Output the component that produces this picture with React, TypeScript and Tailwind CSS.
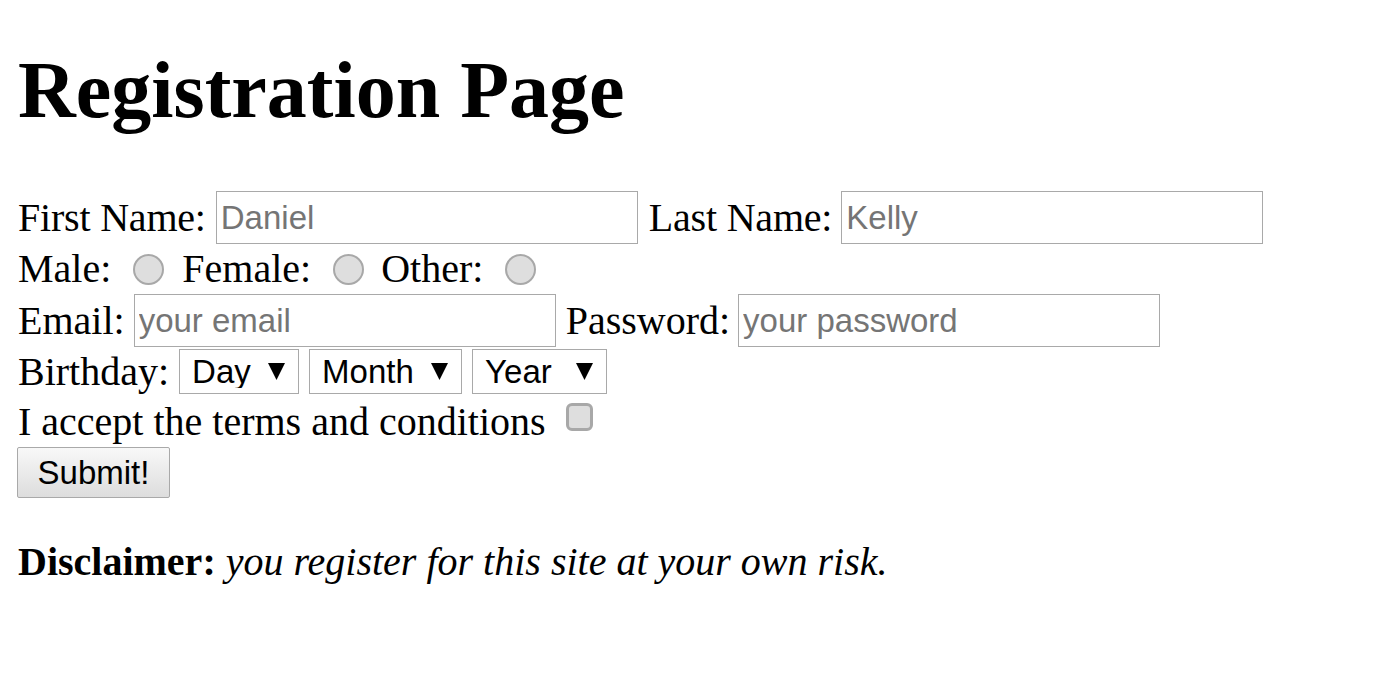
import React from "react";

const serif = "font-['Liberation_Serif','Times_New_Roman',serif]";
const sans = "font-['Liberation_Sans',Arial,sans-serif]";

function Radio({ name }: { name: string }) {
  return (
    <input
      type="radio"
      name={name}
      className="appearance-none w-[31px] h-[31px] rounded-full border-2 border-[#a8a8a8] bg-[#dedede] ml-[22px] mr-[8px] shrink-0"
    />
  );
}

function Dropdown({ label, width }: { label: string; width: string }) {
  return (
    <div className={`relative h-[45px] ${width}`}>
      <select
        className={`appearance-none w-full h-full border border-[#a9a9a9] bg-white pl-[12px] text-[33px] leading-none text-black ${sans}`}
      >
        <option>{label}</option>
      </select>
      <svg
        viewBox="0 0 17 17"
        className="absolute right-[14px] top-[14px] w-[17px] h-[17px] pointer-events-none"
      >
        <path d="M0 0 H17 L8.5 17 Z" fill="#000" />
      </svg>
    </div>
  );
}

const field =
  "w-[422px] h-[53px] border border-[#a9a9a9] pl-[4px] text-[33px] text-black placeholder:text-[#757575] outline-none " +
  sans;

export default function App() {
  return (
    <div className={`min-h-screen bg-white text-black px-[18px] text-[40px] leading-none ${serif}`}>
      <h1 className="pt-[50px] text-[80px] font-bold leading-[80px]">Registration Page</h1>

      <form className="mt-[61px] flex flex-col">
        <div className="flex items-center h-[53px]">
          <span className="tracking-[-0.2px]">First Name:</span>
          <input type="text" placeholder="Daniel" className={`${field} ml-[10px]`} />
          <span className="ml-[11px] tracking-[-0.2px]">Last Name:</span>
          <input type="text" placeholder="Kelly" className={`${field} ml-[9px]`} />
        </div>

        <div className="flex items-center h-[50px]">
          <span>Male:</span>
          <Radio name="gender" />
          <span className="ml-[10px]">Female:</span>
          <Radio name="gender" />
          <span className="ml-[9px]">Other:</span>
          <Radio name="gender" />
        </div>

        <div className="flex items-center h-[53px]">
          <span>Email:</span>
          <input type="email" placeholder="your email" className={`${field} ml-[9px]`} />
          <span className="ml-[10px]">Password:</span>
          <input type="password" placeholder="your password" className={`${field} ml-[8px]`} />
        </div>

        <div className="flex items-center h-[49px] gap-[10px]">
          <span>Birthday:</span>
          <Dropdown label="Day" width="w-[120px]" />
          <Dropdown label="Month" width="w-[153px]" />
          <Dropdown label="Year" width="w-[135px]" />
        </div>

        <div className="flex items-center h-[51px]">
          <span>I accept the terms and conditions</span>
          <input
            type="checkbox"
            className="appearance-none w-[27px] h-[28px] ml-[20px] mb-[10px] rounded-[6px] border-[3px] border-[#a8a8a8] bg-[#dedede]"
          />
        </div>

        <div>
          <button
            type="button"
            className={`w-[153px] h-[51px] -ml-[1px] border border-[#a9a9a9] rounded-[2px] bg-gradient-to-b from-[#f8f8f8] to-[#dddddd] text-[33px] text-black ${sans}`}
          >
            Submit!
          </button>
        </div>
      </form>

      <p className="mt-[44px]">
        <b>Disclaimer:</b> <i>you register for this site at your own risk.</i>
      </p>
    </div>
  );
}
